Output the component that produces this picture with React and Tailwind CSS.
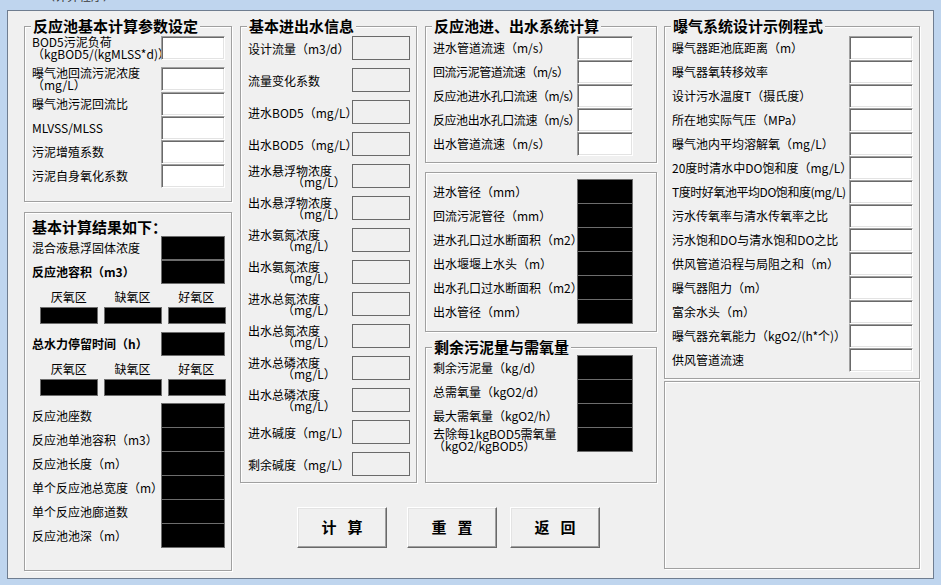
import React from 'react';

const groupOne = [
  ['BOD5污泥负荷', '（kgBOD5/(kgMLSS*d)）'],
  ['曝气池回流污泥浓度', '（mg/L）'],
  ['曝气池污泥回流比'],
  ['MLVSS/MLSS'],
  ['污泥增殖系数'],
  ['污泥自身氧化系数'],
];

const waterInfo = [
  { text: '设计流量（m3/d）' },
  { text: '流量变化系数' },
  { text: '进水BOD5（mg/L）' },
  { text: '出水BOD5（mg/L）' },
  { text: '进水悬浮物浓度', wide: true },
  { text: '出水悬浮物浓度', wide: true },
  { text: '进水氨氮浓度', unit: true },
  { text: '出水氨氮浓度', unit: true },
  { text: '进水总氮浓度', unit: true },
  { text: '出水总氮浓度', unit: true },
  { text: '进水总磷浓度', unit: true },
  { text: '出水总磷浓度', unit: true },
  { text: '进水碱度（mg/L）' },
  { text: '剩余碱度（mg/L）' },
];

const pipeSpeed = [
  '进水管道流速（m/s）',
  '回流污泥管道流速（m/s）',
  '反应池进水孔口流速（m/s）',
  '反应池出水孔口流速（m/s）',
  '出水管道流速（m/s）',
];

const pipeResult = [
  '进水管径（mm）',
  '回流污泥管径（mm）',
  '进水孔口过水断面积（m2）',
  '出水堰堰上水头（m）',
  '出水孔口过水断面积（m2）',
  '出水管径（mm）',
];

const sludge = [
  ['剩余污泥量（kg/d）'],
  ['总需氧量（kgO2/d）'],
  ['最大需氧量（kgO2/h）'],
  ['去除每1kgBOD5需氧量', '（kgO2/kgBOD5）'],
];

const aeration = [
  '曝气器距池底距离（m）',
  '曝气器氧转移效率',
  '设计污水温度T（摄氏度）',
  '所在地实际气压（MPa）',
  '曝气池内平均溶解氧（mg/L）',
  '20度时清水中DO饱和度（mg/L）',
  'T度时好氧池平均DO饱和度(mg/L)',
  '污水传氧率与清水传氧率之比',
  '污水饱和DO与清水饱和DO之比',
  '供风管道沿程与局阻之和（m）',
  '曝气器阻力（m）',
  '富余水头（m）',
  '曝气器充氧能力（kgO2/(h*个)）',
  '供风管道流速',
];

const zones = ['厌氧区', '缺氧区', '好氧区'];

const Group = ({ title, className = '', children }) => (
  <div className={`border border-[#a0a0a0] shadow-[inset_1px_1px_0_#ffffff,1px_1px_0_#ffffff] ${className}`}>
    {title && (
      <div className="-mt-[11px] ml-[6px] w-fit bg-[#f0f0f0] px-[2px] text-[15px] font-bold leading-[20px] whitespace-nowrap">
        {title}
      </div>
    )}
    {children}
  </div>
);

// white sunken textbox, classic 3d edge
const Sunken = ({ w = 'w-[64px]' }) => (
  <div className={`h-[24px] shrink-0 bg-white border border-t-[#a0a0a0] border-l-[#a0a0a0] border-b-white border-r-white shadow-[inset_1px_1px_0_#696969,inset_-1px_-1px_0_#e3e3e3] ${w}`} />
);

const Flat = () => <div className="h-[24px] w-[58px] shrink-0 border border-[#6a6a6a] bg-[#f0f0f0]" />;

const Black = ({ w = 'w-[64px]', h = 'h-[25px]' }) => (
  <div className={`shrink-0 bg-black border border-[#6d6d6d] ${w} ${h}`} />
);

const Label = ({ lines, tight = false }) => (
  <div className={`min-w-0 flex-1 whitespace-nowrap text-[12px] leading-[12px] ${tight ? 'tracking-[-0.45px]' : ''}`}>
    {lines.map((l) => (
      <div key={l}>{l}</div>
    ))}
  </div>
);

const BlackStack = ({ rows, w, className = '' }) => (
  <div className={className}>
    {rows.map((lines, i) => (
      <div key={i} className={`flex h-[25px] items-center ${i > 0 ? '-mt-px' : ''}`}>
        <Label lines={lines} />
        <Black w={w} />
      </div>
    ))}
  </div>
);

const Button = ({ a, b }) => (
  <button className="flex h-[41px] w-[90px] items-center justify-center gap-[11px] border border-t-white border-l-white border-b-[#696969] border-r-[#696969] bg-[#f0f0f0] text-[15px] font-bold shadow-[inset_-1px_-1px_0_#a0a0a0,inset_1px_1px_0_#e3e3e3]">
    <span>{a}</span>
    <span>{b}</span>
  </button>
);

export default function App() {
  return (
    <div className="flex h-[585px] w-[941px] flex-col overflow-hidden bg-[#bfd5ee] px-[7px] pb-[6px] font-['Noto_Sans_CJK_SC',sans-serif] text-black">
      <div className="h-[10px] overflow-hidden">
        <div className="-mt-[11px] pl-[36px] text-[12px] leading-[14px] text-[#3b3b3b]">（计算程序）</div>
      </div>
      <div className="flex-1 border border-[#6f7d90] bg-[#f0f0f0] pl-[16px] pt-[15px]">
        <div className="flex">
          {/* column 1 */}
          <div className="w-[208px]">
            <Group title="反应池基本计算参数设定" className="h-[176px]">
              <div className="pl-[7px] pr-[6px]">
                {groupOne.map((lines, i) => (
                  <div
                    key={i}
                    className={`flex h-[24px] items-center ${i === 1 ? 'mt-[7px]' : ''} ${i === 2 ? 'mt-[1px]' : ''}`}
                  >
                    <Label lines={lines} />
                    <Sunken />
                  </div>
                ))}
              </div>
            </Group>
            <Group className="mt-[10px] h-[359px]">
              <div className="pl-[7px] pr-[6px]">
                <div className="h-[23px] pt-[5px] text-[15px] font-bold leading-[18px]">基本计算结果如下：</div>
                <div className="flex h-[24px] items-center">
                  <Label lines={['混合液悬浮固体浓度']} />
                  <Black h="h-[24px]" />
                </div>
                <div className="flex h-[24px] items-center">
                  <div className="flex-1 whitespace-nowrap text-[12px] font-bold">反应池容积（m3）</div>
                  <Black h="h-[24px]" />
                </div>
                <div className="flex h-[23px] gap-[6px] pl-[8px] pt-[5px] text-[12px] leading-[16px]">
                  {zones.map((z) => (
                    <div key={z} className="w-[58px] text-center">{z}</div>
                  ))}
                </div>
                <div className="flex gap-[6px] pl-[8px]">
                  {zones.map((z) => (
                    <Black key={z} w="w-[58px]" h="h-[17px]" />
                  ))}
                </div>
                <div className="mt-[8px] flex h-[24px] items-center">
                  <div className="flex-1 whitespace-nowrap text-[12px] font-bold">总水力停留时间（h）</div>
                  <Black h="h-[24px]" />
                </div>
                <div className="flex h-[23px] gap-[6px] pl-[8px] pt-[5px] text-[12px] leading-[16px]">
                  {zones.map((z) => (
                    <div key={z} className="w-[58px] text-center">{z}</div>
                  ))}
                </div>
                <div className="flex gap-[6px] pl-[8px]">
                  {zones.map((z) => (
                    <Black key={z} w="w-[58px]" h="h-[17px]" />
                  ))}
                </div>
                <BlackStack
                  className="mt-[7px]"
                  rows={[
                    ['反应池座数'],
                    ['反应池单池容积（m3）'],
                    ['反应池长度（m）'],
                    ['单个反应池总宽度（m）'],
                    ['单个反应池廊道数'],
                    ['反应池池深（m）'],
                  ]}
                />
              </div>
            </Group>
          </div>

          {/* columns 2 and 3 with buttons */}
          <div className="ml-[8px] flex flex-col">
            <div className="flex">
              <Group title="基本进出水信息" className="h-[457px] w-[177px]">
                <div className="flex flex-col gap-[8px] pl-[7px] pr-[6px]">
                  {waterInfo.map((r) => (
                    <div key={r.text} className="flex h-[24px] items-center">
                      <div className="min-w-0 flex-1 whitespace-nowrap text-[12px] leading-[11px]">
                        <div>{r.text}</div>
                        {r.wide && <div className="pl-[44px]">（mg/L）</div>}
                        {r.unit && <div className="pl-[34px]">（mg/L）</div>}
                      </div>
                      <Flat />
                    </div>
                  ))}
                </div>
              </Group>
              <div className="ml-[8px] w-[232px]">
                <Group title="反应池进、出水系统计算" className="h-[137px]">
                  <div className="pl-[7px] pr-[23px]">
                    {pipeSpeed.map((t) => (
                      <div key={t} className="flex h-[24px] items-center">
                        <Label lines={[t]} tight={t.length > 12} />
                        <Sunken w="w-[56px]" />
                      </div>
                    ))}
                  </div>
                </Group>
                <Group className="mt-[9px] h-[160px]">
                  <BlackStack className="pl-[7px] pr-[23px] pt-[6px]" w="w-[56px]" rows={pipeResult.map((t) => [t])} />
                </Group>
                <Group title="剩余污泥量与需氧量" className="mt-[15px] h-[136px]">
                  <BlackStack className="-mt-[2px] pl-[7px] pr-[23px]" w="w-[56px]" rows={sludge} />
                </Group>
              </div>
            </div>
            <div className="mt-[24px] flex pl-[57px]">
              <Button a="计" b="算" />
              <div className="ml-[20px]">
                <Button a="重" b="置" />
              </div>
              <div className="ml-[13px]">
                <Button a="返" b="回" />
              </div>
            </div>
          </div>

          {/* column 4 */}
          <div className="ml-[7px] w-[256px]">
            <Group title="曝气系统设计示例程式" className="h-[353px]">
              <div className="pl-[7px] pr-[6px]">
                {aeration.map((t) => (
                  <div key={t} className="flex h-[24px] items-center">
                    <Label lines={[t]} tight={t.startsWith('T度')} />
                    <Sunken />
                  </div>
                ))}
              </div>
            </Group>
            <Group className="mt-[2px] h-[188px]" />
          </div>
        </div>
      </div>
    </div>
  );
}
